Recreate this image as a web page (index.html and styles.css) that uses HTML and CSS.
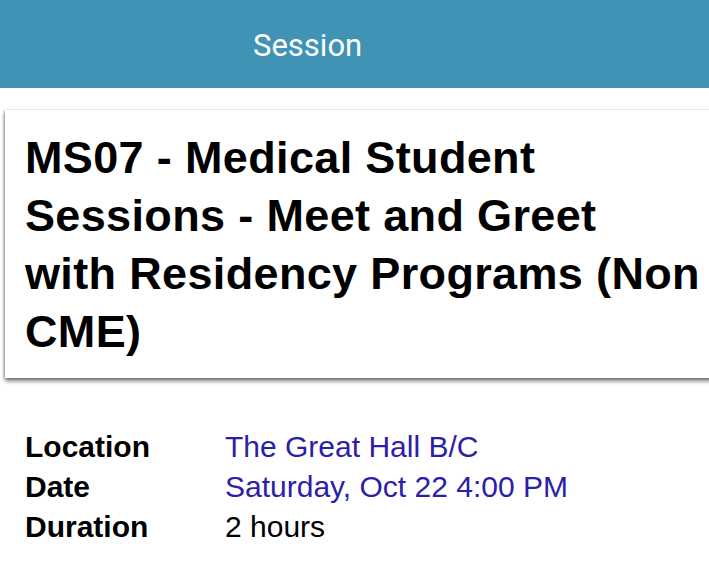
FILE: index.html
```html
<!DOCTYPE html>
<html lang="en">
<head>
<meta charset="utf-8">
<title>Session</title>
<link rel="stylesheet" href="styles.css">
</head>
<body>
<header class="topbar"><span class="topbar-title">Session</span></header>
<main class="content">
  <section class="title-card">
    <h1 class="title">MS07 - Medical Student Sessions - Meet and Greet<br>with Residency Programs (Non CME)</h1>
  </section>
  <dl class="details">
    <dt>Location</dt><dd class="link">The Great Hall B/C</dd>
    <dt>Date</dt><dd class="link">Saturday, Oct 22 4:00 PM</dd>
    <dt>Duration</dt><dd>2 hours</dd>
  </dl>
</main>
</body>
</html>
```
FILE: styles.css
```css
html, body {
  margin: 0;
  padding: 0;
  background: #ffffff;
  overflow: hidden;
}
body {
  width: 709px;
  height: 573px;
  font-family: "Liberation Sans", Arial, sans-serif;
  color: #000;
}
.topbar {
  height: 88px;
  background: #4093b4;
  display: flex;
  align-items: center;
  padding-left: 253px;
  box-sizing: border-box;
}
.topbar-title {
  font-family: Roboto, "Liberation Sans", sans-serif;
  font-size: 31px;
  line-height: 31px;
  color: #ffffff;
  padding-top: 3px;
}
.content {
  padding-top: 22px;
}
.title-card {
  margin-left: 5px;
  margin-right: -20px;
  background: #fff;
  padding: 19px 20px 17px 20px;
  box-shadow: 0 3px 4px rgba(0, 0, 0, 0.55), -1px 0 2px rgba(0, 0, 0, 0.2);
}
.title {
  margin: 0;
  font-size: 45px;
  line-height: 58px;
  font-weight: bold;
  letter-spacing: 0.35px;
  width: 684px;
}
.details {
  margin: 49px 0 0 25px;
  display: grid;
  grid-template-columns: 200px 1fr;
  font-size: 30px;
  line-height: 40px;
}
.details dt {
  font-weight: bold;
}
.details dd {
  margin: 0;
}
.details .link {
  color: #2c1ea6;
}
```
